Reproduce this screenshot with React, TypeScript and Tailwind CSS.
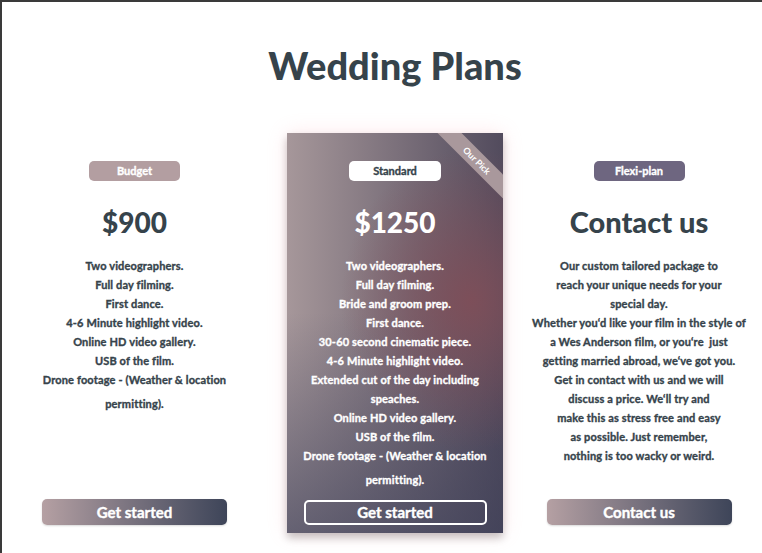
import React from "react";

type Line = { text: string; wrap?: boolean };

const budget: Line[] = [
  { text: "Two videographers." },
  { text: "Full day filming." },
  { text: "First dance." },
  { text: "4-6 Minute highlight video." },
  { text: "Online HD video gallery." },
  { text: "USB of the film." },
  { text: "Drone footage - (Weather & location" },
  { text: "permitting).", wrap: true },
];

const standard: Line[] = [
  { text: "Two videographers." },
  { text: "Full day filming." },
  { text: "Bride and groom prep." },
  { text: "First dance." },
  { text: "30-60 second cinematic piece." },
  { text: "4-6 Minute highlight video." },
  { text: "Extended cut of the day including" },
  { text: "speaches." },
  { text: "Online HD video gallery." },
  { text: "USB of the film." },
  { text: "Drone footage - (Weather & location" },
  { text: "permitting).", wrap: true },
];

const flexi: Line[] = [
  { text: "Our custom tailored package to" },
  { text: "reach your unique needs for your" },
  { text: "special day." },
  { text: "Whether you‘d like your film in the style of" },
  { text: "a Wes Anderson film, or you‘re  just" },
  { text: "getting married abroad, we‘ve got you." },
  { text: "Get in contact with us and we will" },
  { text: "discuss a price. We‘ll try and" },
  { text: "make this as stress free and easy" },
  { text: "as possible. Just remember," },
  { text: "nothing is too wacky or weird." },
];

// text is a touch heavier in the design, stroke it slightly
const Lines = ({ lines }: { lines: Line[] }) => (
  <div className="mt-[18px] text-[11px] font-bold leading-[19px] tracking-[0.15px] whitespace-pre [-webkit-text-stroke:0.35px_currentColor]">
    {lines.map((l, i) => (
      <div key={i} className={l.wrap ? "pt-[5px]" : ""}>
        {l.text}
      </div>
    ))}
  </div>
);

const Badge = ({ label, className }: { label: string; className: string }) => (
  <div
    className={`mx-auto h-5 w-[91px] rounded-[5px] text-[11px] font-bold leading-5 [-webkit-text-stroke:0.35px_currentColor] ${className}`}
  >
    {label}
  </div>
);

const GradientButton = ({ label }: { label: string }) => (
  <button className="mt-auto h-[26px] w-[185px] self-center rounded-[5px] bg-linear-to-r from-[#b5a0a3] to-[#3e4559] text-[15px] font-bold leading-[26px] text-white shadow-[0_1px_2px_rgba(0,0,0,0.15)] [-webkit-text-stroke:0.4px_currentColor]">
    {label}
  </button>
);

export default function App() {
  return (
    <div
      className="h-[553px] w-[762px] overflow-hidden border-l-2 border-t-2 border-[#3a3a3a] bg-white text-[#36434b]"
      style={{ fontFamily: "Lato, 'Noto Sans', sans-serif" }}
    >
      <h1 className="mt-[45px] pl-[26px] text-center text-[38px] font-black leading-[37px]">
        Wedding Plans
      </h1>

      <div className="mt-[49px] flex items-stretch pl-[40px]">
        {/* Budget */}
        <div className="flex h-[400px] w-[185px] flex-col pb-[8px] pt-[28px] text-center">
          <Badge label="Budget" className="bg-[#b39ea1] text-white" />
          <div className="mt-[25px] text-[28px] font-black leading-[32px]">$900</div>
          <Lines lines={budget} />
          <GradientButton label="Get started" />
        </div>

        {/* Standard */}
        <div className="relative ml-[60px] flex h-[400px] w-[216px] flex-col overflow-hidden bg-[image:radial-gradient(ellipse_60%_38%_at_85%_42%,rgba(128,78,88,0.9),transparent),linear-gradient(to_bottom,transparent_45%,rgba(58,62,88,0.6)),linear-gradient(to_right,#a6979a,#524b5d)] pb-[8px] pt-[28px] text-center text-white shadow-[0_5px_8px_rgba(0,0,0,0.22),0_0_18px_rgba(255,205,210,0.45)]">
          <div className="absolute left-[140px] top-[19px] h-[17px] w-[100px] rotate-45 bg-[#a9989c] text-[9px] font-bold leading-[17px] text-white">
            Our Pick
          </div>
          <Badge label="Standard" className="w-[92px] bg-white text-[#36434b]" />
          <div className="mt-[25px] text-[28px] font-black leading-[32px]">$1250</div>
          <Lines lines={standard} />
          <button className="mt-auto h-[25px] w-[183px] self-center rounded-[5px] border-2 border-white text-[15px] font-bold leading-[21px] text-white [-webkit-text-stroke:0.4px_currentColor]">
            Get started
          </button>
        </div>

        {/* Flexi */}
        <div className="ml-[21px] flex h-[400px] w-[230px] flex-col pb-[8px] pt-[28px] text-center">
          <Badge label="Flexi-plan" className="bg-[#6e6680] text-white" />
          <div className="mt-[25px] text-[29px] font-black leading-[32px]">Contact us</div>
          <Lines lines={flexi} />
          <GradientButton label="Contact us" />
        </div>
      </div>
    </div>
  );
}
